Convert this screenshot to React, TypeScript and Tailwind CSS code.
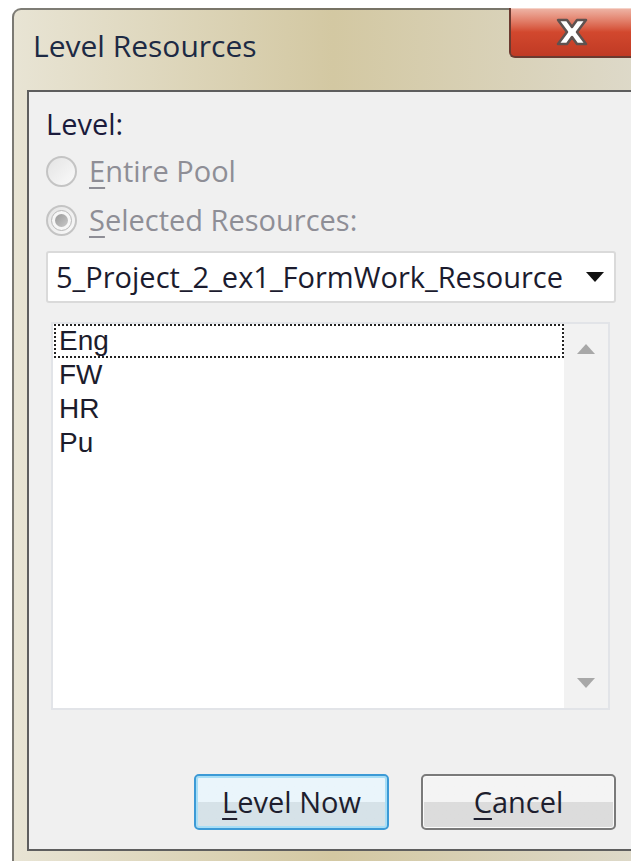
import React from "react";

const ui = { fontFamily: '"Open Sans", "Noto Sans", "Liberation Sans", sans-serif' };
const listFont = { fontFamily: '"Liberation Sans", Arial, sans-serif' };

function Radio({ checked }: { checked?: boolean }) {
  return (
    <span className="flex h-[31px] w-[31px] shrink-0 items-center justify-center rounded-full border-[2px] border-[#c4c4c4] bg-gradient-to-br from-[#e4e4e4] to-[#fafafa]">
      {checked && (
        <span className="flex h-[21px] w-[21px] items-center justify-center rounded-full border border-[#b8b8b8] bg-[#f6f6f6]">
          <span className="h-[13px] w-[13px] rounded-full bg-gradient-to-br from-[#9a9a9a] to-[#c8c8c8]" />
        </span>
      )}
    </span>
  );
}

function CloseButton() {
  return (
    <div className="flex h-[50px] w-[124px] items-center justify-center rounded-bl-[6px] border-b-2 border-l-2 border-[#6b3a30] bg-gradient-to-b from-[#eeb6a8] via-[#d2482e] to-[#c03a24] shadow-[inset_0_1px_0_#f5d2c8]">
      <svg width="40" height="30" viewBox="0 0 40 30">
        <path
          d="M6 3 L15 3 L20 10 L25 3 L34 3 L25 15 L34 27 L25 27 L20 20 L15 27 L6 27 L15 15 Z"
          fill="#ffffff"
          stroke="#5e5250"
          strokeWidth="2.5"
          strokeLinejoin="round"
        />
      </svg>
    </div>
  );
}

function DialogButton({ children, focused }: { children: React.ReactNode; focused?: boolean }) {
  return (
    <button
      type="button"
      className={
        "flex h-[56px] w-[195px] items-center justify-center rounded-[5px] border-[2px] bg-gradient-to-b from-50% to-50% text-[29px] text-[#1e1e2e] " +
        (focused
          ? "border-[#3c9ad6] from-[#eaf5fb] to-[#d6e2e8] shadow-[inset_0_0_0_2px_#a8def6]"
          : "border-[#7a7a7a] from-[#f4f4f4] to-[#dcdcdc] shadow-[inset_0_0_0_1px_#fbfbfb]")
      }
    >
      {children}
    </button>
  );
}

export default function App() {
  const items = ["Eng", "FW", "HR", "Pu"];

  return (
    <div className="h-[861px] w-[631px] overflow-hidden bg-white pl-[12px] pt-[8px]" style={ui}>
      <div className="flex h-[853px] w-[640px] flex-col rounded-tl-[9px] border-l-2 border-t-2 border-[#3a3a3a]/60 bg-gradient-to-r from-[#e8e4d4] via-[#d3c8a2] to-[#dedacb]">
        {/* title bar */}
        <div className="flex h-[80px] items-start justify-between">
          <div className="pl-[19px] pt-[18px] text-[30px] leading-[36px] text-[#1d2a44]">Level Resources</div>
          <div className="-mt-[2px] mr-[19px]">
            <CloseButton />
          </div>
        </div>

        {/* client area */}
        <div className="ml-[13px] flex flex-1 flex-col border-l-2 border-t-2 border-b-2 border-[#5e5e5e] bg-[#f0f0f0] pb-[19px] pl-[17px] pr-[36px] pt-[14px] text-[29px]">
          <div className="leading-[36px] text-[#1b1b3c]">Level:</div>

          <div className="mt-[11px] flex items-center gap-[12px] text-[#8e8e96]">
            <Radio />
            <span className="leading-[36px]">
              <u className="underline-offset-[5px]">E</u>ntire Pool
            </span>
          </div>
          <div className="mt-[13px] flex items-center gap-[12px] text-[#8e8e96]">
            <Radio checked />
            <span className="leading-[36px]">
              <u className="underline-offset-[5px]">S</u>elected Resources:
            </span>
          </div>

          <div className="mt-[13px] flex h-[52px] items-center justify-between rounded-[3px] border-2 border-[#dadada] bg-white pl-[8px] pr-[10px] text-[#1b1b2e]">
            <span>5_Project_2_ex1_FormWork_Resource</span>
            <svg width="18" height="10" viewBox="0 0 18 10">
              <path d="M0 0 H18 L9 10 Z" fill="#111111" />
            </svg>
          </div>

          <div className="mt-[19px] ml-[5px] mr-[6px] flex h-[388px] border-2 border-[#e2e4e8] bg-white">
            <div className="flex-1 pl-[1px]" style={listFont}>
              {items.map((item, i) => (
                <div
                  key={item}
                  className={
                    "h-[34px] pl-[3px] text-[28px] leading-[30px] text-[#1c1c2c] " +
                    (i === 0 ? "border-2 border-dotted border-[#222]" : "border-2 border-transparent")
                  }
                >
                  {item}
                </div>
              ))}
            </div>
            <div className="flex w-[44px] flex-col items-center justify-between bg-[#f2f2f2] py-[20px]">
              <svg width="18" height="10" viewBox="0 0 18 10">
                <path d="M9 0 L18 10 H0 Z" fill="#a8a8a8" />
              </svg>
              <svg width="18" height="10" viewBox="0 0 18 10">
                <path d="M0 0 H18 L9 10 Z" fill="#a8a8a8" />
              </svg>
            </div>
          </div>

          <div className="mt-auto flex justify-end gap-[32px]">
            <DialogButton focused>
              <span>
                <u className="underline-offset-[5px]">L</u>evel Now
              </span>
            </DialogButton>
            <DialogButton>
              <span>
                <u className="underline-offset-[5px]">C</u>ancel
              </span>
            </DialogButton>
          </div>
        </div>
        <div className="h-[10px]" />
      </div>
    </div>
  );
}
